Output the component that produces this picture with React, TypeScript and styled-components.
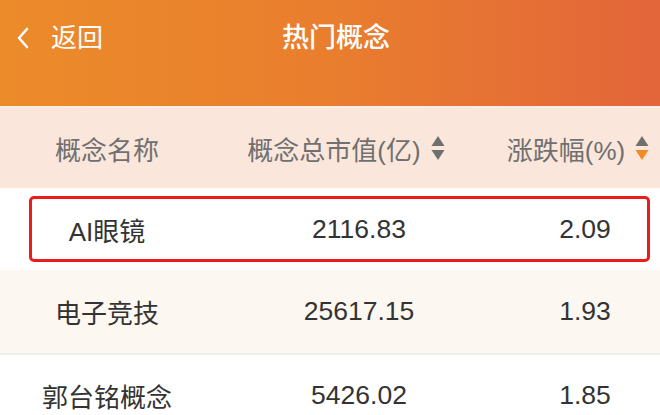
import React from "react";
import styled, { createGlobalStyle } from "styled-components";

const Global = createGlobalStyle`
  html, body { margin: 0; padding: 0; background: #fff; }
  body { font-family: "Liberation Sans", "Noto Sans CJK SC", sans-serif; overflow: hidden; }
`;

const Page = styled.div`
  width: 660px;
  height: 415px;
  overflow: hidden;
  background: #fff;
`;

const Header = styled.header`
  height: 106px;
  background: linear-gradient(90deg, #ec8b2a 0%, #e97e2e 50%, #e3653a 100%);
  display: grid;
  grid-template-columns: 1fr auto 1fr;
  align-items: start;
  padding-top: 22px;
  box-sizing: border-box;
  color: #fff;
`;

const Back = styled.div`
  display: flex;
  align-items: center;
  gap: 22px;
  padding-left: 17px;
  font-size: 26px;
  line-height: 32px;
`;

const Title = styled.div`
  font-size: 27px;
  line-height: 32px;
  font-weight: 500;
  padding-left: 12px;
`;

const Table = styled.div`
  display: flex;
  flex-direction: column;
`;

const HeadRow = styled.div`
  display: grid;
  grid-template-columns: 214px 290px 156px;
  height: 80px;
  align-items: center;
  background: #fae6da;
  border-top: 2px solid #f8ece4;
  color: #707070;
  font-size: 26px;
`;

const HeadCell = styled.div<{ $shift?: number }>`
  display: flex;
  align-items: center;
  justify-content: center;
  gap: 10px;
  padding-right: ${(p) => p.$shift ?? 0}px;
`;

const Row = styled.div<{ $alt?: boolean; $h: number }>`
  position: relative;
  display: grid;
  grid-template-columns: 214px 290px 156px;
  height: ${(p) => p.$h}px;
  align-items: center;
  background: ${(p) => (p.$alt ? "#fdf7f1" : "#ffffff")};
  border-bottom: ${(p) => (p.$alt ? "2px solid #eeeeee" : "none")};
  color: #333;
  font-size: 26px;
`;

const Cell = styled.div<{ $dx?: number; $num?: boolean }>`
  text-align: center;
  padding-left: ${(p) => p.$dx ?? 0}px;
  font-size: ${(p) => (p.$num ? "26.5px" : "26px")};
`;

const Highlight = styled.div`
  position: absolute;
  left: 29px;
  right: 10px;
  top: 8px;
  bottom: 8px;
  border: 3px solid #ea1c1c;
  border-radius: 5px;
  pointer-events: none;
`;

const SortIcon = ({ active }: { active?: boolean }) => (
  <svg width="14" height="26" viewBox="0 0 14 26">
    <polygon points="7,1 13.5,11 0.5,11" fill="#6f6f6f" />
    <polygon points="0.5,15 13.5,15 7,25" fill={active ? "#f08a22" : "#6f6f6f"} />
  </svg>
);

const Chevron = () => (
  <svg width="12" height="22" viewBox="0 0 12 22">
    <polyline points="10,2 2,11 10,20" fill="none" stroke="#fff" strokeWidth="2.6" strokeLinecap="round" strokeLinejoin="round" />
  </svg>
);

const rows = [
  { name: "AI眼镜", cap: "2116.83", pct: "2.09", h: 82 },
  { name: "电子竞技", cap: "25617.15", pct: "1.93", h: 83 },
  { name: "郭台铭概念", cap: "5426.02", pct: "1.85", h: 80 },
];

export default function App() {
  return (
    <Page>
      <Global />
      <Header>
        <Back>
          <Chevron />
          <span>返回</span>
        </Back>
        <Title>热门概念</Title>
        <div />
      </Header>
      <Table>
        <HeadRow>
          <HeadCell>概念名称</HeadCell>
          <HeadCell $shift={26}>
            概念总市值(亿)
            <SortIcon />
          </HeadCell>
          <HeadCell $shift={8}>
            涨跌幅(%)
            <SortIcon active />
          </HeadCell>
        </HeadRow>
        {rows.map((r, i) => (
          <Row key={r.name} $alt={i === 1} $h={r.h}>
            <Cell>{r.name}</Cell>
            <Cell $num>{r.cap}</Cell>
            <Cell $num $dx={6}>{r.pct}</Cell>
            {i === 0 && <Highlight />}
          </Row>
        ))}
      </Table>
    </Page>
  );
}
